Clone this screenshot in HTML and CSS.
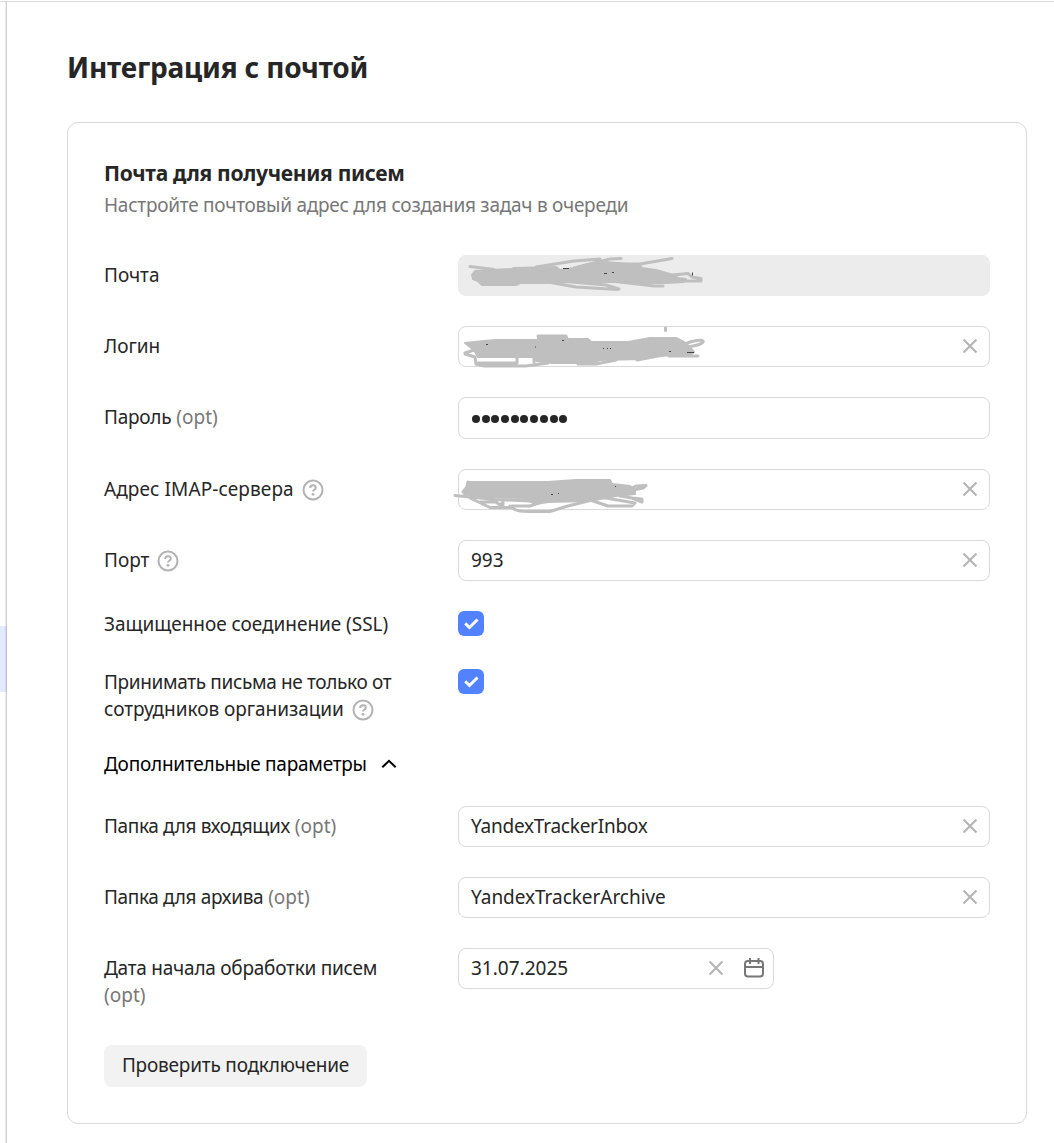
FILE: index.html
```html
<!DOCTYPE html>
<html lang="ru">
<head>
<meta charset="utf-8">
<title>Интеграция с почтой</title>
<link rel="stylesheet" href="styles.css">
</head>
<body>
<svg class="sprite" aria-hidden="true">
  <symbol id="clear" viewBox="0 0 16 16"><path d="M1.500 1.500l13 13M14.500 1.500l-13 13" fill="none" stroke="currentColor" stroke-width="2"/></symbol>
  <symbol id="help" viewBox="0 0 22 22"><circle cx="11" cy="11" r="9.500" fill="none" stroke="currentColor" stroke-width="2"/><path d="M8.200 8.900c0-1.700 1.200-2.600 2.800-2.600s2.800.9 2.800 2.400c0 2-2.800 2-2.800 3.900" fill="none" stroke="currentColor" stroke-width="2"/><circle cx="11" cy="15.300" r="1.400" fill="currentColor"/></symbol>
  <symbol id="check" viewBox="0 0 16 13"><path d="M2.200 6.400l4.300 4.100 8-8" fill="none" stroke="currentColor" stroke-width="3"/></symbol>
</svg>
<main class="page">
  <aside class="rail"><div class="rail-active"></div></aside>
  <section class="content">
    <h1 class="title">Интеграция с почтой</h1>
    <form class="card">
      <h2 class="heading">Почта для получения писем</h2>
      <p class="lead">Настройте почтовый адрес для создания задач в очереди</p>

      <div class="row first">
        <div class="label snug">Почта</div>
        <div class="field disabled">
          <svg class="scribble" viewBox="0 0 280 60">
            <path class="blot" d="M25 26L42 25 62 24 64 23 106 22 110 25 124 23 142 18 155 17 190 20 192 23 206 25 220 29 228 33 236 34 234 37 215 38 190 38 160 37 120 37 98 38 70 38 66 40 32 40 28 36 23 34 22 30Z"/>
            <path d="M20 21.500L44 24.500M86 22L124 16 150 14M124 23L160 14 171 13.500M150 19L190 19 222 13.500M98 37L126 42 168 44.500M110 36L156 40 169 44M222 30L238 28.500 242 32 251 33.500 251 36 236 36M170 37L204 41 213 41"/>
            <path class="nib" d="M113 23.500h6M154 28.500h3M162 27.500h2M242.500 27.500v3"/>
          </svg>
        </div>
      </div>
      <div class="row">
        <div class="label snug">Логин</div>
        <div class="field">
          <svg class="scribble login" viewBox="0 0 280 60">
            <path class="blot" d="M15 28L34 26 46 25 88 25 88 22 116 21 118 24 138 24 141 27 178 27 200 23 226 23 234 27 240 32 244 37 240 40 222 41 215 39 192 44 150 45 142 48 102 48 86 46 84 42 28 42 24 35Z"/>
            <path d="M15 38L24 35M15 39L25 42 26 49 34 51 76 51 98 48M28 48L66 48M67 43L67 48M84 42L84 47M88 21L116 21M128 49L146 49 166 45M187 45L208 41 232 38M226 33L240 27C250 24 256 25 252 28 248 31 240 31 234 33M219 41L248 41M215.500 13L215.500 15.500"/>
            <path class="nib" d="M36 29.500h2M85 32h1M112 25.500h2M153 33.500h1M157 33.500h1M160 33.500h1M219 36.500h2M237 37.500h7"/>
          </svg>
          <svg class="clear"><use href="#clear"/></svg>
        </div>
      </div>
      <div class="row">
        <div class="label"><span class="tight">Пароль</span> <span class="opt">(opt)</span></div>
        <div class="field password">
          <i></i><i></i><i></i><i></i><i></i><i></i><i></i><i></i><i></i><i></i>
        </div>
      </div>
      <div class="row">
        <div class="label"><span class="loose">Адрес IMAP-сервера</span><svg class="help"><use href="#help"/></svg></div>
        <div class="field">
          <svg class="scribble imap" viewBox="0 0 280 60">
            <path class="blot" d="M18 17L98 17 126 15 160 15 162 19 180 21 185 25 185 29 166 31 140 36 98 37 86 39 72 33 30 32 14 29Z"/>
            <path d="M18 17L17 22 13 27M5 30.500L45 34.500 81 36M20 33L40 42.500 60 42.500M30 37L46 37 50 40 53 37 53 42M60 41C65 46 70 46.500 80 46.500L100 46.500 116 41.500 140 35.500M62 41L80 41 94 36M140 35L158 41 182 41 185 38 150 32M170 31L182 33 192 37 192 34 182 33M180 24L186 21 196 20.500 193 23 183 25"/>
            <path class="nib" d="M165 21.500h1M101 29.500h2M108 28.500h1"/>
          </svg>
          <svg class="clear"><use href="#clear"/></svg>
        </div>
      </div>
      <div class="row">
        <div class="label">Порт<svg class="help"><use href="#help"/></svg></div>
        <div class="field"><span>993</span><svg class="clear"><use href="#clear"/></svg></div>
      </div>
      <div class="row toggle">
        <div class="label snug">Защищенное соединение (SSL)</div>
        <div class="checkbox"><svg><use href="#check"/></svg></div>
      </div>
      <div class="row toggle">
        <div class="label"><span class="tighter">Принимать письма не только от</span><br><span class="snug">сотрудников организации</span><svg class="help"><use href="#help"/></svg></div>
        <div class="checkbox"><svg><use href="#check"/></svg></div>
      </div>
      <div class="more"><span class="tight">Дополнительные параметры</span><svg class="chevron" viewBox="0 0 16 10"><path d="M1.300 8.300L8 1.800l6.700 6.500" fill="none" stroke="#000" stroke-width="2"/></svg></div>
      <div class="row">
        <div class="label"><span class="tighter">Папка для входящих</span> <span class="opt">(opt)</span></div>
        <div class="field"><span class="tight">YandexTrackerInbox</span><svg class="clear"><use href="#clear"/></svg></div>
      </div>
      <div class="row">
        <div class="label"><span class="tighter">Папка для архива</span> <span class="opt">(opt)</span></div>
        <div class="field"><span class="snug">YandexTrackerArchive</span><svg class="clear"><use href="#clear"/></svg></div>
      </div>
      <div class="row">
        <div class="label"><span class="tight">Дата начала обработки писем</span><br><span class="opt">(opt)</span></div>
        <div class="field date"><span>31.07.2025</span><svg class="clear"><use href="#clear"/></svg>
          <svg class="calendar" viewBox="0 0 20 21"><rect x="1" y="4" width="18" height="15.500" rx="3" fill="none" stroke="currentColor" stroke-width="2"/><path d="M1 10h18M6 1v6M14.500 1v6" fill="none" stroke="currentColor" stroke-width="2"/></svg>
        </div>
      </div>
      <button class="button" type="button">Проверить подключение</button>
    </form>
  </section>
</main>
</body>
</html>
```
FILE: styles.css
```css
* { box-sizing: border-box; }
body {
  margin: 0;
  background: #fff;
  color: #262626;
  font: 19px/27px "Noto Sans", sans-serif;
}
.sprite { display: none; }
.loose { letter-spacing: 0.1px; }
.snug { letter-spacing: -0.04px; }
.tight { letter-spacing: -0.24px; }
.tighter { letter-spacing: -0.35px; }
.page {
  display: flex;
  height: 1143px;
  border-top: 1px solid #fff;
  box-shadow: inset 0 1px #d9d9d9;
}
.rail {
  width: 7px;
  margin-top: 1px;
  padding-top: 624px;
  border-right: 1px solid #d0d0d0;
  box-shadow: inset -1px 0 #ebebeb;
}
.rail-active {
  width: 7px;
  height: 66px;
  background: linear-gradient(90deg, #e3eaff 5px, #d3daef 5px, #d3daef 6px, #bac3dc 6px);
}
.content { width: 1020px; padding: 46px 0 0 60px; }
.title {
  margin: 0;
  font-size: 28px;
  line-height: 40px;
  font-weight: 700;
  letter-spacing: -0.2px;
  white-space: nowrap;
}
.card {
  width: 960px;
  height: 1002px;
  margin-top: 35px;
  padding: 35px 36px 36px;
  border: 1px solid #d9d9d9;
  border-radius: 11px;
}
.heading {
  margin: 0;
  font-size: 21px;
  line-height: 30px;
  font-weight: 700;
  letter-spacing: -0.29px;
  white-space: nowrap;
}
.lead { margin: 4px 0 0; color: #777; letter-spacing: -0.25px; white-space: nowrap; }
.row { display: flex; align-items: flex-start; margin-top: 30px; }
.row.first { margin-top: 36px; }
.label { width: 354px; padding-top: 7px; white-space: nowrap; }
.opt { color: #777; }
.help { width: 22px; height: 22px; margin-left: 8px; vertical-align: -5px; color: #b3b3b3; }
.field {
  display: flex;
  align-items: center;
  position: relative;
  width: 532px;
  height: 41px;
  padding: 0 11px 0 12px;
  border: 1px solid #d9d9d9;
  border-radius: 8px;
}
.field.disabled { background: #ececec; border-color: #ececec; }
.field.password { height: 42px; gap: 1.7px; padding-top: 2px; padding-left: 13px; }
.password i { width: 8px; height: 8px; border-radius: 50%; background: #262626; }
.field.date { width: 316px; padding-right: 9px; }
.clear { width: 16px; height: 16px; margin: 0 0 2px auto; color: #b3b3b3; }
.calendar { width: 20px; height: 21px; margin: 0 0 2px 20px; color: #777; }
.scribble {
  position: absolute;
  left: -9px;
  top: -11px;
  width: 280px;
  height: 60px;
  fill: none;
  stroke: #bfbfbf;
  stroke-width: 3;
  stroke-linecap: round;
  stroke-linejoin: round;
}
.scribble.login { top: -12px; }
.scribble.imap { top: -5px; }
.scribble .blot { fill: #bfbfbf; stroke-width: 2; }
.scribble .nib { stroke: #444; stroke-width: 1; stroke-linecap: butt; }
.toggle .label { padding-top: 0; }
.row.toggle + .toggle { margin-top: 31px; }
.checkbox {
  display: flex;
  align-items: center;
  justify-content: center;
  width: 26px;
  height: 25px;
  border-radius: 6px;
  background: #5282ff;
  color: #fff;
}
.checkbox svg { width: 16px; height: 13px; }
.more { display: flex; align-items: center; margin-top: 28px; color: #000; }
.chevron { width: 16px; height: 10px; margin: 0 0 1px 14px; }
.more + .row { margin-top: 28px; }
.button {
  width: 263px;
  height: 42px;
  margin: 36px 0 0;
  padding: 0 0 2px;
  border: 0;
  border-radius: 8px;
  background: #f2f2f2;
  color: #262626;
  font: inherit;
  letter-spacing: -0.2px;
}
```
